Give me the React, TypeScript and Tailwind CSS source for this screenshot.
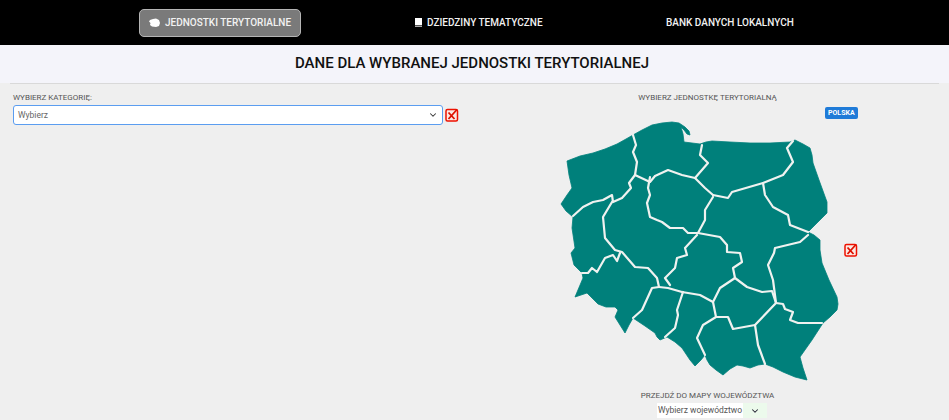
import { ChevronDown } from "lucide-react";

const outline =
  "M567 161 L580 156 L593 153 L605 149 L617 144 L626 139 L633 135 L642 130 L652 125 L662 123 L672 122 L679 123 L685 127 L689 131 L690 135 L687 134 L684 130 L681 127 L683 134 L684 142 L692 143 L700 144 L706 142 L712 141 L730 142 L750 143 L770 143 L790 142 L795 140 L803 144 L810 148 L812 155 L813 163 L819 180 L827 202 L827 213 L818 222 L808 232 L814 235 L820 240 L820 250 L822 263 L829 280 L837 297 L838 304 L837 310 L830 317 L823 323 L812 340 L800 357 L803 368 L807 380 L795 377 L783 372 L773 367 L765 364 L758 365 L750 368 L743 366 L737 365 L730 369 L723 375 L716 370 L710 365 L707 360 L705 355 L701 360 L695 366 L690 360 L682 348 L675 342 L667 337 L660 340 L657 337 L655 333 L645 326 L633 318 L629 325 L625 333 L620 325 L615 317 L618 310 L615 307 L606 307 L598 304 L587 293 L575 297 L583 278 L582 273 L574 265 L571 253 L575 248 L572 228 L573 217 L566 211 L561 204 L567 195 L572 188 L569 175 Z";

const borders = [
  "M633 135 L636 145 L633 152 L637 162 L635 175",
  "M635 175 L629 183 L631 188 L622 198 L613 202 L612 195 L603 200 L593 202 L583 207 L573 216",
  "M635 175 L650 182 L655 176 L668 170 L682 175 L695 178 L705 188 L713 195",
  "M650 177 L648 188 L650 195 L647 203 L650 217 L657 220 L662 222 L670 228 L683 228 L688 233 L698 233 L705 220 L705 210 L713 197",
  "M702 145 L700 155 L708 163 L695 178",
  "M713 195 L728 198 L732 192 L763 183 L783 175 L793 162 L787 148 L793 141",
  "M763 183 L765 195 L773 207 L788 215 L790 225 L808 232",
  "M808 235 L800 242 L775 248 L774 253 L768 265 L773 280 L776 303",
  "M698 233 L720 237 L727 245 L727 252 L740 253 L742 262 L733 268 L735 278",
  "M735 278 L747 287 L762 292 L772 291 L776 303",
  "M697 235 L685 248 L687 255 L677 258 L675 268 L665 278 L670 285",
  "M659 287 L668 288 L682 292 L700 295 L713 302 L720 288 L735 278",
  "M612 202 L603 217 L605 238 L615 250 L622 252 L635 267 L648 268 L657 278 L659 287",
  "M620 253 L617 261 L613 255 L605 258 L597 272 L592 268 L588 273 L582 273",
  "M659 287 L652 288 L642 310 L633 318",
  "M683 292 L677 310 L678 315 L675 328 L665 337",
  "M713 302 L716 317 L703 325 L697 338 L705 355",
  "M716 317 L728 317 L733 329 L755 325",
  "M776 303 L755 325",
  "M755 325 L758 345 L765 364",
  "M776 303 L783 304 L785 309 L793 312 L790 320 L798 323 L822 323",
];

function BrokenIcon() {
  return (
    <svg width="14" height="14" viewBox="0 0 14 14" className="shrink-0">
      <rect x="1" y="1.500" width="11.500" height="11.500" rx="1.500" fill="#fbe9e4" stroke="#ee1100" strokeWidth="1.500" />
      <path d="M3.500 4.500 L9.500 11 M12 1.500 L3.500 11" stroke="#dd1100" strokeWidth="1.800" />
    </svg>
  );
}

function PolandMap() {
  return (
    <svg viewBox="550 115 315 270" width="315" height="270" className="block">
      <path d={outline} fill="#00807b" stroke="#00807b" strokeWidth="0.8" strokeLinejoin="round" />
      {borders.map((d, i) => (
        <path key={i} d={d} fill="none" stroke="#f0f2f0" strokeWidth="2.2" strokeLinejoin="round" strokeLinecap="round" />
      ))}
    </svg>
  );
}

export default function App() {
  return (
    <div className="h-screen overflow-hidden bg-[#efefef] font-['Roboto',sans-serif]">
      {/* Top nav */}
      <nav className="flex h-[45px] items-center gap-[104px] bg-black pl-[139px] text-[10px] font-medium uppercase text-[#f2f2f2]">
        <a className="flex h-[28px] w-[162px] items-center gap-[5px] rounded-[5px] border border-[#b5b5b5] bg-[#7a7a7a] pl-[9px]">
          <svg width="11" height="9" viewBox="0 0 11 9">
            <path d="M1 2 L4 1 L7 .5 L10 2 L11 5 L10 8 L7 9 L3 8.500 L1 7 L1.500 5 L0 3.500Z" fill="#fff" />
          </svg>
          <span>Jednostki terytorialne</span>
        </a>
        <a className="flex h-[28px] w-[147px] items-center gap-[5px] pl-[10px]">
          <svg width="7" height="9" viewBox="0 0 7 9">
            <path d="M0 0 H7 V7 H0Z" fill="#fff" />
            <path d="M0 7.500 H7 V9 H0Z" fill="#aaa" />
          </svg>
          <span>Dziedziny tematyczne</span>
        </a>
        <a className="flex h-[28px] w-[146px] items-center pl-[10px]">Bank danych lokalnych</a>
      </nav>

      {/* Title */}
      <div className="bg-[#f4f4fa] pb-[10px] pt-[9px]">
        <h1 className="pr-[5px] text-center text-[15px] font-medium uppercase leading-[19px] text-[#111]">
          Dane dla wybranej jednostki terytorialnej
        </h1>
      </div>
      <div className="mx-[10px] h-px bg-[#d9d9d9]" />

      <div className="flex">
        {/* Category select */}
        <div className="w-[466px] pl-[13px] pt-[8px]">
          <div className="text-[8px] uppercase leading-[11px] text-[#555]">Wybierz kategorię:</div>
          <div className="mt-[2px] flex items-center gap-[2px]">
            <div className="flex h-[20px] w-[430px] items-center justify-between rounded-[3px] border border-[#5b9df0] bg-white pl-[4px] pr-[4px] text-[8.500px] text-[#666]">
              <span>Wybierz</span>
              <ChevronDown size={10} strokeWidth={2.5} className="text-[#333]" />
            </div>
            <BrokenIcon />
          </div>
        </div>

        {/* Map column */}
        <div className="relative flex w-[483px] flex-col items-center pt-[8px]">
          <div className="text-[8px] uppercase leading-[11px] text-[#555]">Wybierz jednostkę terytorialną</div>
          <div className="mt-[12px]">
            <PolandMap />
          </div>
          <div className="mt-[5px] text-[8px] uppercase leading-[11px] text-[#555]">Przejdź do mapy województwa</div>
          <div className="ml-[9px] mt-[2px] flex h-[15px] items-center text-[8.500px] text-[#555]">
            <span className="flex h-full w-[86px] items-center justify-center whitespace-nowrap bg-white">Wybierz województwo</span>
            <span className="flex h-full w-[24px] items-center justify-center bg-[#ecfaec]">
              <ChevronDown size={10} strokeWidth={2.5} className="text-[#223]" />
            </span>
          </div>

          <span className="absolute left-[359px] top-[23px] rounded-[2px] bg-[#1f7bd8] px-[3px] py-[1px] text-[7px] font-bold uppercase leading-[10px] text-white">
            Polska
          </span>
          <div className="absolute left-[378px] top-[159px]">
            <BrokenIcon />
          </div>
        </div>
      </div>
    </div>
  );
}
